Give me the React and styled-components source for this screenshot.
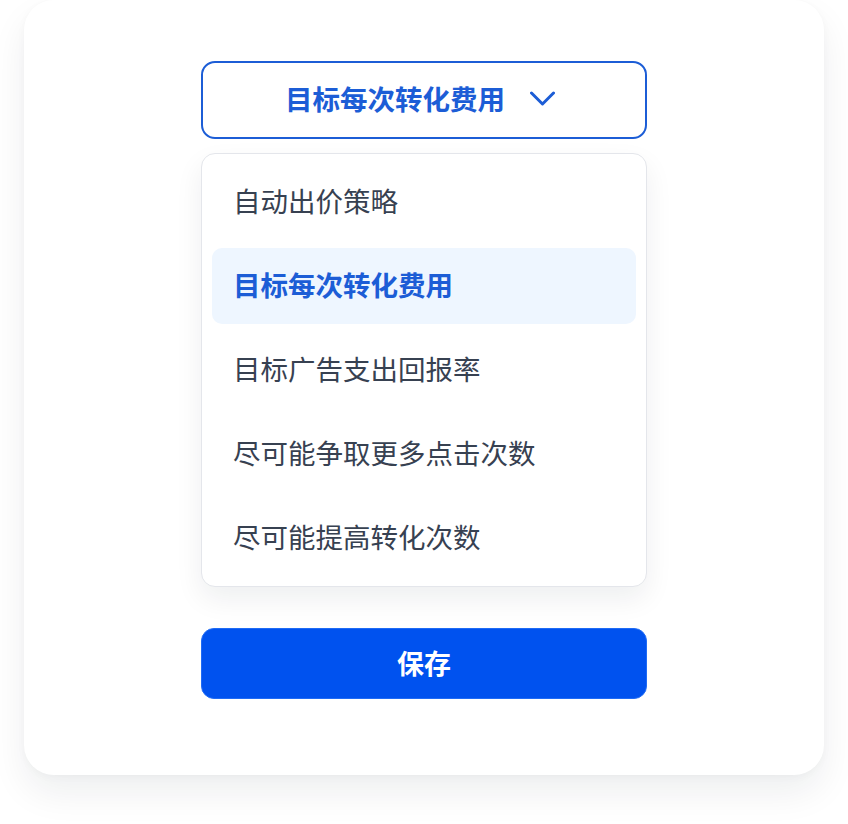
import React, { useState } from "react";
import styled, { createGlobalStyle } from "styled-components";

const GlobalStyle = createGlobalStyle`
  html, body {
    margin: 0;
    padding: 0;
    background: #ffffff;
  }
  body {
    font-family: "Noto Sans CJK SC", "Noto Sans", sans-serif;
  }
  * { box-sizing: border-box; }
`;

const Page = styled.div`
  padding: 0 24px 48px;
`;

const Card = styled.div`
  width: 800px;
  height: 775px;
  background: #ffffff;
  border-radius: 30px;
  box-shadow: 0 18px 36px rgba(17, 24, 39, 0.07), 0 2px 8px rgba(17, 24, 39, 0.03);
  display: flex;
  flex-direction: column;
  align-items: center;
  padding-top: 61px;
`;

const Column = styled.div`
  width: 446px;
  display: flex;
  flex-direction: column;
`;

const Trigger = styled.button`
  height: 78px;
  width: 100%;
  border: 2px solid #1c5dd6;
  border-radius: 14px;
  background: #ffffff;
  display: flex;
  align-items: center;
  justify-content: center;
  gap: 25px;
  font-family: inherit;
  font-size: 27.5px;
  line-height: 1;
  font-weight: 700;
  color: #1c5dd6;
  cursor: pointer;
  padding: 0 8px 2px 0;
`;

const Menu = styled.ul`
  list-style: none;
  margin: 14px 0 0;
  padding: 10px;
  border: 1px solid #e4e6eb;
  border-radius: 14px;
  background: #ffffff;
  box-shadow: 0 12px 28px rgba(17, 24, 39, 0.07);
  display: flex;
  flex-direction: column;
  gap: 8px;
`;

const Option = styled.li`
  height: 76px;
  display: flex;
  align-items: center;
  padding: 0 22px 3px 21px;
  border-radius: 10px;
  font-size: 27.5px;
  line-height: 1;
  font-weight: ${(p) => (p.$active ? 700 : 400)};
  color: ${(p) => (p.$active ? "#1c5dd6" : "#374151")};
  background: ${(p) => (p.$active ? "#eef6ff" : "transparent")};
  cursor: pointer;
`;

const SaveButton = styled.button`
  margin-top: 41px;
  height: 71px;
  width: 100%;
  border: 1px solid #1f6bf5;
  border-radius: 13px;
  background: #0052ef;
  color: #ffffff;
  font-family: inherit;
  font-size: 27px;
  line-height: 1;
  font-weight: 700;
  padding: 0 0 3px;
  cursor: pointer;
`;

const Chevron = () => (
  <svg width="25" height="16" viewBox="0 0 25 16" fill="none">
    <path
      d="M1.5 2 L12.5 13 L23.5 2"
      stroke="#1c5dd6"
      strokeWidth="3"
      strokeLinecap="round"
      strokeLinejoin="round"
    />
  </svg>
);

const strategies = [
  "自动出价策略",
  "目标每次转化费用",
  "目标广告支出回报率",
  "尽可能争取更多点击次数",
  "尽可能提高转化次数",
];

export default function App() {
  const [selected, setSelected] = useState(1);
  return (
    <>
      <GlobalStyle />
      <Page>
        <Card>
          <Column>
            <Trigger type="button">
              <span>{strategies[selected]}</span>
              <Chevron />
            </Trigger>
            <Menu>
              {strategies.map((s, i) => (
                <Option key={s} $active={i === selected} onClick={() => setSelected(i)}>
                  {s}
                </Option>
              ))}
            </Menu>
            <SaveButton type="button">保存</SaveButton>
          </Column>
        </Card>
      </Page>
    </>
  );
}
